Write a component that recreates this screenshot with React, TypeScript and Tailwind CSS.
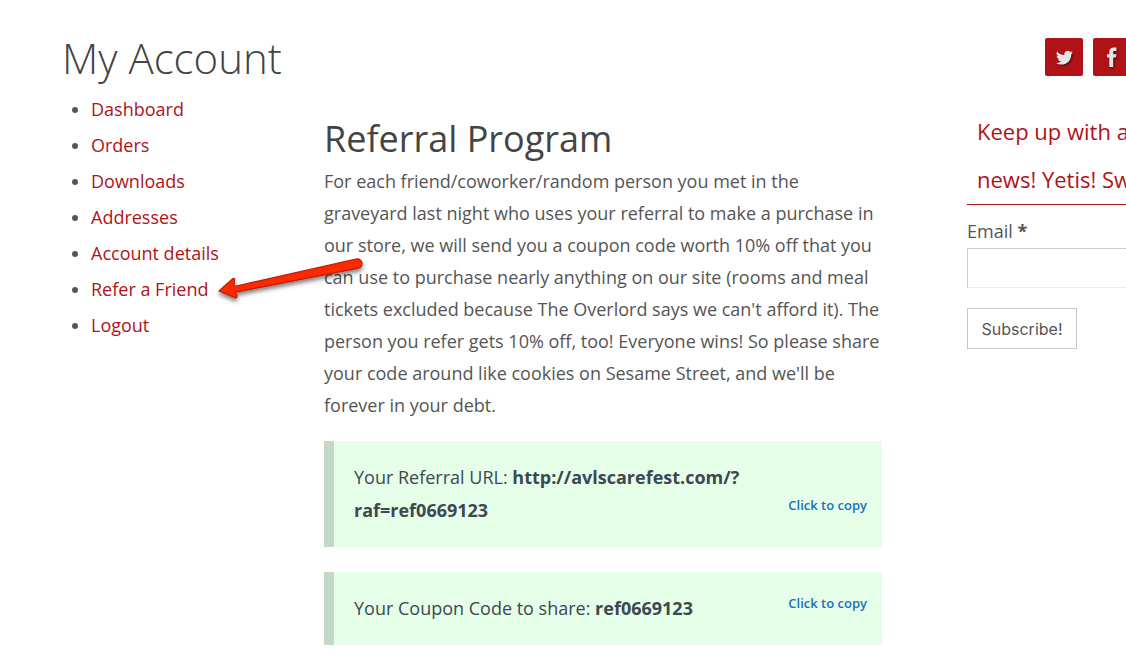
import React, { useState } from 'react';

const navItems = [
  'Dashboard',
  'Orders',
  'Downloads',
  'Addresses',
  'Account details',
  'Refer a Friend',
  'Logout',
];

// Red arrow that points at the referral link
const Arrow: React.FC = () => (
  <svg
    className="absolute left-full top-0 ml-2 -mt-[15px] pointer-events-none"
    width="152"
    height="56"
    viewBox="216 256 152 56"
    aria-hidden="true"
  >
    <defs>
      <filter id="arrowShadow" x="-10%" y="-20%" width="120%" height="150%">
        <feDropShadow dx="0" dy="3" stdDeviation="2" floodColor="#000" floodOpacity="0.5" />
      </filter>
    </defs>
    <path
      d="M219 291 L233 278.5 Q235 278 234.5 280 L234 286.5 L356 259 A4.7 4.7 0 0 1 358.5 268.2 L235.5 292.2 L237 296 Q237 298.5 234.5 297.5 Z"
      fill="#fc2a04"
      stroke="#c01c08"
      strokeWidth="1.2"
      strokeLinejoin="round"
      filter="url(#arrowShadow)"
    />
  </svg>
);

const CopyBox: React.FC<{ label: string; value: string; children: React.ReactNode }> = ({ label, value, children }) => {
  const [copied, setCopied] = useState(false);

  const handleCopy = () => {
    navigator.clipboard?.writeText(value);
    setCopied(true);
  };

  return (
    <div className="flex items-end justify-between border-l-10 border-[#c3d9c5] bg-[#e5ffe8] py-5 pl-5 pr-[15px] text-[#3d4852]">
      <p className="leading-[33px]">
        {label} <strong className="font-bold">{children}</strong>
      </p>
      <button
        type="button"
        onClick={handleCopy}
        className="mb-3 shrink-0 cursor-pointer text-[13px] leading-5 font-semibold text-[#1c6fc0]"
      >
        {copied ? 'Copied' : 'Click to copy'}
      </button>
    </div>
  );
};

const App: React.FC = () => {
  const [email, setEmail] = useState('');

  return (
    <div className="flex min-h-screen gap-[85px] overflow-hidden bg-white pl-[62px] font-['Open_Sans',sans-serif] text-[18px] text-[#555]">
      {/* Account area */}
      <main className="min-w-0 flex-1 pt-8 pb-3">
        <h1 className="text-[42px] leading-[52px] font-light text-[#444]">My Account</h1>

        <div className="flex">
          <nav className="w-[262px] shrink-0 pt-[7px]">
            <ul className="list-disc pl-[29px] leading-9">
              {navItems.map((item) => (
                <li key={item}>
                  <span className="relative inline-block">
                    <a href="#" className="text-[#b01218]">
                      {item}
                    </a>
                    {item === 'Refer a Friend' && <Arrow />}
                  </span>
                </li>
              ))}
            </ul>
          </nav>

          <section className="min-w-0 flex-1 pt-8">
            <h2 className="text-[36px] leading-[46px] text-[#444]">Referral Program</h2>
            <p className="mt-[3px] leading-8">
              For each friend/coworker/random person you met in the graveyard last night who uses your referral to make
              a purchase in our store, we will send you a coupon code worth 10% off that you can use to purchase nearly
              anything on our site (rooms and meal tickets excluded because The Overlord says we can't afford it). The
              person you refer gets 10% off, too! Everyone wins! So please share your code around like cookies on Sesame
              Street, and we'll be forever in your debt.
            </p>

            <div className="mt-5 flex flex-col gap-[25px]">
              <CopyBox label="Your Referral URL:" value="http://avlscarefest.com/?raf=ref0669123">
                http://avlscarefest.com/?
                <wbr />
                raf=ref0669123
              </CopyBox>
              <CopyBox label="Your Coupon Code to share:" value="ref0669123">
                ref0669123
              </CopyBox>
            </div>
          </section>
        </div>
      </main>

      {/* Sidebar, wider than the space that is left for it */}
      <aside className="w-[159px] shrink-0 pt-[38px]">
        <div className="w-[300px]">
          <div className="flex gap-[10px] pl-[78px]">
            <a href="#" aria-label="Twitter" className="flex size-[38px] items-center justify-center rounded-xs bg-[#b01218]">
              <svg width="17" height="18" viewBox="0 0 24 24" fill="#e4e4e4" className="drop-shadow-[1px_1px_1px_rgba(0,0,0,0.6)]">
                <path d="M23.95 5.57a10 10 0 0 1-2.82.77 4.96 4.96 0 0 0 2.16-2.72c-.95.55-2 .95-3.13 1.18a4.92 4.92 0 0 0-8.38 4.48C7.69 9.1 4.07 7.13 1.64 4.16a4.92 4.92 0 0 0 1.52 6.57 4.9 4.9 0 0 1-2.23-.61v.06c0 2.38 1.7 4.37 3.95 4.82a5 5 0 0 1-2.22.09 4.94 4.94 0 0 0 4.6 3.42A9.87 9.87 0 0 1 0 20.54a13.94 13.94 0 0 0 7.55 2.21c9.05 0 14-7.5 14-13.98 0-.21 0-.42-.02-.63a9.94 9.94 0 0 0 2.42-2.57z" />
              </svg>
            </a>
            <a href="#" aria-label="Facebook" className="flex size-[38px] items-center justify-center rounded-xs bg-[#b01218]">
              <svg width="12" height="20" viewBox="0 0 12 20" fill="#e4e4e4" className="drop-shadow-[1px_1px_1px_rgba(0,0,0,0.6)]">
                <path d="M10.5 0.5V4H8.6C7.4 4 7.2 4.5 7.2 5.3V7.2H10.4L10 10.6H7.2V20H3.3V10.6H1V7.2H3.3V4.8C3.3 2 5 .4 7.6 .4 9 .4 10.1 .5 10.5 .5Z" />
              </svg>
            </a>
          </div>

          <h3 className="mt-[31px] border-b border-[#b01218] pb-px pl-[10px] text-[22px] leading-12 whitespace-nowrap text-[#b01218]">
            Keep up with a
            <br />
            news! Yetis! Sw
          </h3>

          <form onSubmit={(e) => e.preventDefault()}>
            <label htmlFor="email" className="mt-[10px] block leading-8">
              Email <strong className="font-bold">*</strong>
            </label>
            <input
              id="email"
              type="email"
              value={email}
              onChange={(e) => setEmail(e.target.value)}
              className="mt-px block h-10 w-full border border-[#ccc] border-b-[#eee] bg-white px-3"
            />
            <button
              type="submit"
              className="mt-5 h-[41px] w-[110px] cursor-pointer border border-[#c8c8c8] bg-white pt-px font-['Inter',sans-serif] text-[16px] text-[#555]"
            >
              Subscribe!
            </button>
          </form>
        </div>
      </aside>
    </div>
  );
};

export default App;
